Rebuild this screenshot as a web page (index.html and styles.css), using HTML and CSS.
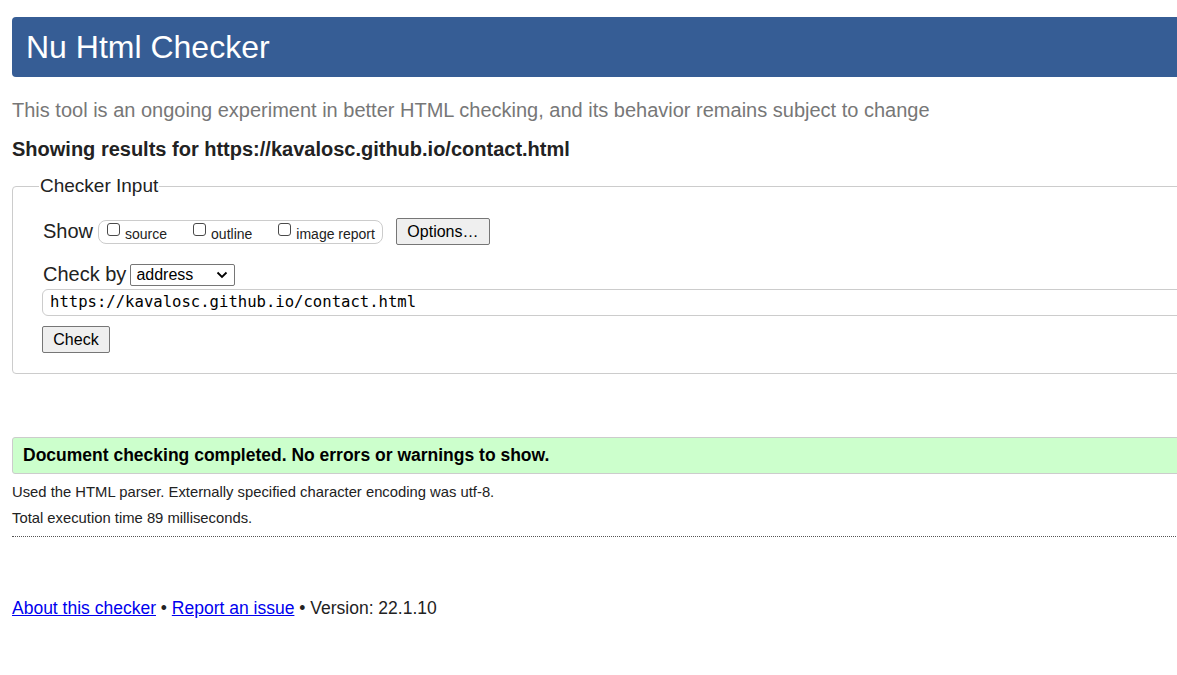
FILE: index.html
```html
<!DOCTYPE html>
<html lang="en">
<head>
<meta charset="utf-8">
<title>Showing results for https://kavalosc.github.io/contact.html - Nu Html Checker</title>
<link rel="stylesheet" href="styles.css">
</head>
<body>
<div class="page">
  <h1 class="banner">Nu Html Checker</h1>
  <p class="tagline">This tool is an ongoing experiment in better HTML checking, and its behavior remains subject to change</p>
  <p class="showing">Showing results for https://kavalosc.github.io/contact.html</p>
  <fieldset class="input-box">
    <legend>Checker Input</legend>
    <div class="row show-row">
      <span class="lbl">Show</span>
      <span class="opts">
        <label class="opt"><input type="checkbox"><span>source</span></label>
        <label class="opt"><input type="checkbox"><span>outline</span></label>
        <label class="opt"><input type="checkbox"><span>image report</span></label>
      </span>
      <button class="btn btn-options" type="button">Options…</button>
    </div>
    <div class="row checkby-row">
      <span class="lbl">Check by</span>
      <span class="select"><span>address</span><svg width="12" height="8" viewBox="0 0 12 8"><path d="M1.5 1.5 L6 6 L10.5 1.5" fill="none" stroke="#000" stroke-width="1.8"/></svg></span>
    </div>
    <div class="url">https://kavalosc.github.io/contact.html</div>
    <button class="btn btn-check" type="button">Check</button>
  </fieldset>
  <p class="success">Document checking completed. No errors or warnings to show.</p>
  <p class="details">Used the HTML parser. Externally specified character encoding was utf-8.</p>
  <p class="details">Total execution time 89 milliseconds.</p>
  <hr class="sep">
  <p class="footer"><a href="#">About this checker</a> • <a href="#">Report an issue</a> • Version: 22.1.10</p>
</div>
</body>
</html>
```

FILE: styles.css
```css
html {
  overflow: hidden;
  background: #fff;
}
body {
  margin: 0;
  font-family: "Liberation Sans", Arial, sans-serif;
  color: #222;
}
.page {
  width: 1240px;
  padding: 17px 0 0 12px;
}
.banner {
  margin: 0;
  height: 60px;
  line-height: 60px;
  padding-left: 14px;
  background: #365d95;
  color: #fff;
  font-size: 32px;
  font-weight: normal;
  border-radius: 4px;
}
.tagline {
  margin: 21px 0 0;
  font-size: 20px;
  line-height: 24px;
  color: #777;
}
.showing {
  margin: 15px 0 0;
  font-size: 20px;
  line-height: 24px;
  font-weight: bold;
  color: #222;
}
.input-box {
  margin: 14px 0 0;
  padding: 21px 0 20px 30px;
  border: 1px solid #ccc;
  border-radius: 4px;
}
.input-box legend {
  margin-left: -4px;
  padding: 0 1px;
  font-size: 19px;
  color: #222;
}
.row {
  display: flex;
  align-items: center;
}
.lbl {
  font-size: 20px;
  color: #222;
}
.opts {
  display: flex;
  align-items: center;
  gap: 26px;
  margin-left: 5px;
  height: 22px;
  padding: 0 7px 0 8px;
  border: 1px solid #ccc;
  border-radius: 8px;
}
.opt {
  display: flex;
  align-items: center;
  font-size: 14px;
  color: #222;
}
.opt input {
  -webkit-appearance: none;
  appearance: none;
  box-sizing: border-box;
  margin: 0 5px 0 0;
  width: 13px;
  height: 13px;
  border: 1px solid #4a4a4a;
  border-radius: 3px;
  background: #fff;
  position: relative;
  top: -2px;
}
.opt span {
  position: relative;
  top: 2px;
}
.btn {
  font-family: "Liberation Sans", Arial, sans-serif;
  font-size: 16px;
  color: #000;
  background: #efefef;
  border: 1px solid #767676;
  border-radius: 2px;
  padding: 0;
  height: 27px;
}
.btn-options {
  margin-left: 13px;
  width: 94px;
}
.checkby-row {
  margin-top: 18px;
}
.select {
  display: inline-flex;
  align-items: center;
  justify-content: space-between;
  width: 105px;
  height: 22px;
  margin-left: 4px;
  padding: 0 6px 0 5px;
  box-sizing: border-box;
  border: 1px solid #767676;
  border-radius: 2px;
  font-size: 16px;
  color: #000;
}
.url {
  margin-top: 3px;
  height: 25px;
  line-height: 25px;
  padding-left: 7px;
  border: 1px solid #ccc;
  border-radius: 6px;
  font-family: "DejaVu Sans Mono", "Liberation Mono", monospace;
  font-size: 15.6px;
  color: #000;
  margin-left: -1px;
}
.btn-check {
  display: block;
  margin-top: 10px;
  margin-left: -1px;
  width: 68px;
}
.success {
  margin: 63px 0 0;
  height: 35px;
  line-height: 35px;
  padding-left: 10px;
  background: #ccffcc;
  border: 1px solid #ccc;
  border-radius: 3px;
  font-size: 17.5px;
  font-weight: bold;
  color: #000;
}
.details {
  margin: 9px 0 0;
  font-size: 14.8px;
  line-height: 18px;
  color: #222;
}
.details + .details {
  margin-top: 8px;
}
.sep {
  margin: 9px 0 0;
  border: 0;
  border-top: 1px dotted #555;
  height: 0;
}
.footer {
  margin: 61px 0 0;
  font-size: 17.5px;
  line-height: 20px;
  color: #222;
}
.footer a {
  color: #0000ee;
  text-decoration: underline;
}
```
